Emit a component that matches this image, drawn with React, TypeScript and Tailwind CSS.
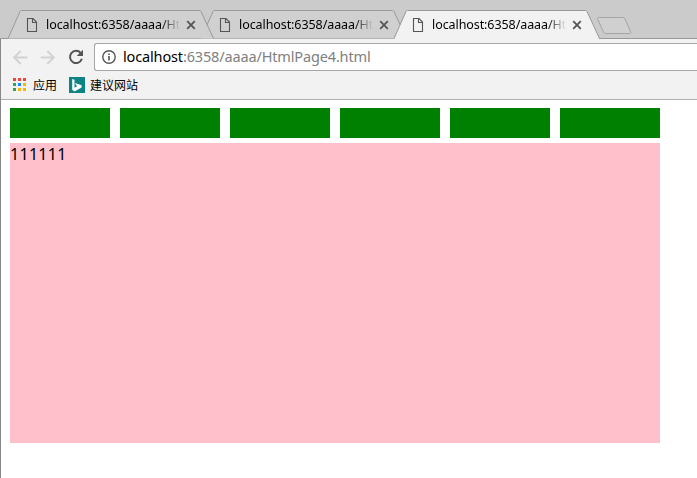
import type { ReactNode } from 'react';

interface TabProps {
  title: string;
  active?: boolean;
  className?: string;
}

const blocks = [1, 2, 3, 4, 5, 6];

const appColors = [
  '#f44336', '#f44336', '#f44336',
  '#34a060', '#1a8cff', '#fbb400',
  '#34a060', '#fbb400', '#fbb400',
];

function PageIcon() {
  return (
    <svg width="12" height="15" viewBox="0 0 12 15" fill="none" stroke="#555" strokeWidth="1.1">
      <path d="M1.5 1.5H7L10.5 5V14.5H1.5Z" />
      <path d="M6.5 1.5V5.5H10.5" />
    </svg>
  );
}

function Tab({ title, active = false, className = '' }: TabProps) {
  return (
    <div className={`relative flex h-[29px] w-[206px] shrink-0 items-center ${className}`}>
      <svg className="absolute inset-0" width="206" height="29" viewBox="0 0 206 29">
        <path
          d="M0 28.5L12 1.5Q12.5 0.5 13.5 0.5H191.5Q192.5 0.5 193 1.5L205.5 28.5"
          fill={active ? '#f2f2f2' : '#d0d0d0'}
          stroke="#999"
        />
        {active && <path d="M1 28.5H205" stroke="#f2f2f2" />}
      </svg>
      <div className="relative flex w-full items-center pl-[18px]">
        <PageIcon />
        <span className="ml-[8px] h-[18px] w-[134px] text-[12.5px] leading-[18px] tracking-[-0.08px] whitespace-nowrap text-black [mask-image:linear-gradient(to_right,black_86%,transparent)]">
          {title}
        </span>
        <svg className="ml-[6px]" width="10" height="10" viewBox="0 0 10 10" stroke="#555" strokeWidth="1.8">
          <path d="M1.2 1.2L8.8 8.8M8.8 1.2L1.2 8.8" />
        </svg>
      </div>
    </div>
  );
}

function Bookmark({ icon, label }: { icon: ReactNode; label: string }) {
  return (
    <div className="flex items-center">
      {icon}
      <span className="pt-[2px] text-[12px] leading-[16px] text-black">{label}</span>
    </div>
  );
}

export default function App() {
  return (
    <div className="flex h-[478px] w-[697px] flex-col overflow-hidden bg-white font-['Noto_Sans','Noto_Sans_CJK_SC',sans-serif]">
      {/* tab strip */}
      <div className="flex h-[39px] items-end border-b border-[#999] bg-[#cbcbcb] pl-[8px]">
        <Tab title="localhost:6358/aaaa/Ht" className="-mb-px z-10" />
        <Tab title="localhost:6358/aaaa/Ht" className="-mb-px -ml-[13px]" />
        <Tab title="localhost:6358/aaaa/Ht" active className="-mb-px -ml-[13px] z-20" />
        <svg className="mb-[3px] -ml-[4px] shrink-0" width="36" height="19" viewBox="0 0 36 19">
          <path
            d="M2.8 1.5H27C28 1.5 28.6 2 29 3L34.6 15.8C35 16.8 34.6 17.5 33.6 17.5H10C8.6 17.5 8 17 7.5 16L1.6 3.3C1.1 2.2 1.6 1.5 2.8 1.5Z"
            fill="#d0d0d0"
            stroke="#a5a5a5"
          />
        </svg>
      </div>

      <div className="flex flex-1 flex-col border-l border-[#888]">
        {/* toolbar */}
        <div className="flex h-[61px] flex-col border-b border-[#b0b0b0] bg-[#f2f2f2] pt-[4px]">
          <div className="flex h-[28px] items-center">
            <svg className="ml-[12px]" width="15" height="15" viewBox="0 0 15 15" fill="none" stroke="#d2d2d2" strokeWidth="1.9">
              <path d="M14.3 7.5H1.5M7.7 1L1.2 7.5L7.7 14" />
            </svg>
            <svg className="ml-[12px]" width="15" height="15" viewBox="0 0 15 15" fill="none" stroke="#d2d2d2" strokeWidth="1.9">
              <path d="M0.7 7.5H13.5M7.3 1L13.8 7.5L7.3 14" />
            </svg>
            <svg className="ml-[13px]" width="16" height="16" viewBox="0 0 16 16">
              <path d="M12.7 3.9A6.1 6.1 0 1 0 13.9 9.8" fill="none" stroke="#555" strokeWidth="2" />
              <path d="M15 0.7V7H8.7Z" fill="#555" />
            </svg>
            <div className="ml-[10px] flex h-[28px] flex-1 items-center rounded-l-[3px] border border-r-0 border-[#a6a6a6] bg-white pl-[7px]">
              <svg width="14" height="14" viewBox="0 0 14 14" fill="none" stroke="#555">
                <circle cx="7" cy="7" r="6.2" strokeWidth="1.4" />
                <path d="M7 6V10.4M7 3.4V4.9" strokeWidth="1.6" />
              </svg>
              <span className="ml-[7px] -mt-[2px] text-[14.5px] leading-[20px] tracking-[-0.15px] whitespace-nowrap text-[#808080]">
                <span className="text-black">localhost</span>:6358/aaaa/HtmlPage4.html
              </span>
            </div>
          </div>

          <div className="flex h-[28px] items-center pl-[12px]">
            <Bookmark
              label="应用"
              icon={
                <div className="mr-[7px] mb-[2px] grid grid-cols-3 gap-[2px]">
                  {appColors.map((color, i) => (
                    <span key={i} className="h-[3px] w-[3px]" style={{ backgroundColor: color }} />
                  ))}
                </div>
              }
            />
            <div className="w-[12px]" />
            <Bookmark
              label="建议网站"
              icon={
                <svg className="mr-[5px]" width="16" height="16" viewBox="0 0 16 16">
                  <rect width="16" height="16" fill="#0c8484" />
                  <path d="M3.2 2L5.5 2.8V10.8L8.5 9L7 8.3L6.1 6L12.6 8.2V10.6L5.5 14.4L3.2 12.8Z" fill="#fff" />
                </svg>
              }
            />
          </div>
        </div>

        {/* page */}
        <div className="flex-1 pt-[8px] pl-[9px]">
          <div className="flex gap-[10px]">
            {blocks.map(n => (
              <div key={n} className="h-[30px] w-[100px] bg-[#008000]" />
            ))}
          </div>
          <div className="mt-[5px] h-[300px] w-[650px] bg-[#ffc0cb] text-[16px] leading-[22px] tracking-[0.3px] text-black">
            111111
          </div>
        </div>
      </div>
    </div>
  );
}
